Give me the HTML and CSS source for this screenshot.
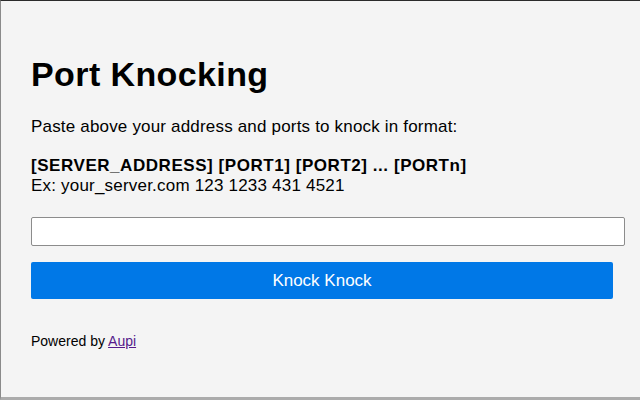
FILE: index.html
```html
<!DOCTYPE html>
<html lang="en">
  <head>
    <meta charset="UTF-8" />
    <meta name="viewport" content="width=device-width, initial-scale=1.0" />
    <title>Port Knocking</title>
    <link rel="stylesheet" href="styles.css">
  </head>
  <body>
    <div class="popup">
      <h1>Port Knocking</h1>
      <p class="hint">Paste above your address and ports to knock in format:</p>
      <p class="format">
        <b>[SERVER_ADDRESS] [PORT1] [PORT2] ... [PORTn]</b><br />
        Ex: your_server.com 123 1233 431 4521
      </p>

      <form class="knock-form" onsubmit="return false;">
        <input type="text" id="knockInput" class="knock-input" />
        <button type="submit" class="knock-button">Knock Knock</button>
      </form>

      <p class="powered">Powered by <a href="#" class="visited">Aupi</a></p>
    </div>
  </body>
</html>
```

FILE: styles.css
```css
html,
body {
  margin: 0;
  padding: 0;
  height: 100%;
}

body {
  font-family: "Liberation Sans", Arial, sans-serif;
  background-color: #f4f4f4;
  color: #000;
}

.popup {
  box-sizing: border-box;
  height: 400px;
  padding: 53px 0 0 30px;
  border-top: 1px solid #2b2b2b;
  border-left: 1px solid #8a8a8a;
  border-bottom: 3px solid #ababab;
}

h1 {
  margin: 0 0 23px 0;
  font-size: 34px;
  line-height: 40px;
  letter-spacing: 0.4px;
  font-weight: bold;
}

.hint {
  margin: 0 0 19px 0;
  font-size: 17px;
  line-height: 20px;
  letter-spacing: 0.18px;
}

.format {
  margin: 0 0 21px 0;
  font-size: 17px;
  line-height: 20px;
  letter-spacing: 0.2px;
}

.format b {
  letter-spacing: 0.55px;
}

.knock-form {
  display: flex;
  flex-direction: column;
  gap: 16px;
}

.knock-input {
  box-sizing: border-box;
  width: 594px;
  height: 29px;
  margin: 0;
  border: 1px solid #8c8c8c;
  border-radius: 2px;
  background-color: #fff;
}

.knock-button {
  box-sizing: border-box;
  width: 582px;
  height: 37px;
  border: none;
  border-radius: 2px;
  background-color: #0078e7;
  color: #fff;
  font-family: "Liberation Sans", Arial, sans-serif;
  font-size: 17px;
}

.powered {
  margin: 34px 0 0 0;
  font-size: 14px;
  line-height: 16px;
}

.powered a {
  color: #551a8b;
}
```
